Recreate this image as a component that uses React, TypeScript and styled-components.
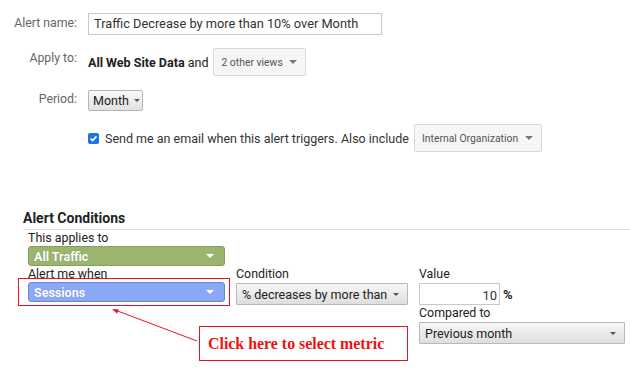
import React from 'react';
import styled, { createGlobalStyle } from 'styled-components';

const GlobalStyle = createGlobalStyle`
  html, body {
    margin: 0;
    background: #fff;
  }
  body {
    font-family: Roboto, 'Liberation Sans', Arial, sans-serif;
    color: #222;
  }
`;

const Page = styled.div`
  width: 630px;
  height: 368px;
  overflow: hidden;
  position: relative;
`;

const Form = styled.div`
  display: flex;
  flex-direction: column;
  gap: 13px;
  padding-top: 13px;
`;

const Row = styled.div<{ h: number }>`
  display: grid;
  grid-template-columns: 77px 1fr;
  column-gap: 11px;
  height: ${p => p.h}px;
`;

const Label = styled.div`
  text-align: right;
  font-size: 12.3px;
  line-height: 20px;
  color: #666;
  align-self: start;
`;

const Field = styled.div`
  display: flex;
  align-items: center;
  gap: 5px;
  font-size: 12.5px;
  color: #222;
  white-space: nowrap;
`;

const TextInput = styled.div`
  box-sizing: border-box;
  width: 294px;
  height: 22px;
  border: 1px solid #c8c8c8;
  padding: 0 5px;
  font-size: 12.8px;
  line-height: 20px;
  color: #333;
  white-space: nowrap;
`;

const Strong = styled.span`
  font-weight: 700;
  color: #222;
`;

const Chooser = styled.div<{ w: number }>`
  box-sizing: border-box;
  width: ${p => p.w}px;
  height: 28px;
  display: flex;
  align-items: center;
  justify-content: space-between;
  gap: 6px;
  padding: 0 8px 0 7px;
  border: 1px solid #d9d9d9;
  border-radius: 2px;
  background: #f6f6f6;
  font-size: 10.4px;
  color: #555;
  white-space: nowrap;
`;

const Caret = styled.span<{ c?: string; s?: number }>`
  width: 0;
  height: 0;
  border-left: ${p => p.s ?? 4}px solid transparent;
  border-right: ${p => p.s ?? 4}px solid transparent;
  border-top: ${p => p.s ?? 4}px solid ${p => p.c ?? '#666'};
  flex: none;
`;

const MenuButton = styled.div`
  box-sizing: border-box;
  width: 55px;
  height: 21px;
  display: flex;
  align-items: center;
  gap: 5px;
  padding: 0 5px 0 4px;
  border: 1px solid #b5b5b5;
  border-radius: 2px;
  background: linear-gradient(#f8f8f8, #e2e2e2);
  font-size: 12.5px;
  color: #222;
`;

const Check = styled.span`
  box-sizing: border-box;
  width: 11px;
  height: 11px;
  border-radius: 2px;
  background: #1a73e8;
  display: inline-flex;
  align-items: center;
  justify-content: center;
  margin-right: 1px;
`;

const EmailText = styled.span`
  font-size: 12.5px;
  color: #333;
`;

const Conditions = styled.div`
  position: relative;
  margin-top: 57px;
`;

const Heading = styled.div`
  margin-left: 23px;
  width: 607px;
  font-size: 14px;
  font-weight: 700;
  color: #222;
  line-height: 17px;
  padding: 1px 0 2px;
  border-bottom: 1px solid #e0e0e0;
`;

const CondGrid = styled.div`
  display: grid;
  grid-template-columns: 197px 172px 206px;
  column-gap: 11px;
  padding-left: 28px;
  align-items: start;
`;

const CondLabel = styled.div<{ col?: number }>`
  grid-column: ${p => p.col ?? 1};
  font-size: 12.4px;
  line-height: 16px;
  color: #222;
  height: 16px;
`;

const Bar = styled.div<{ bg: string; edge: string }>`
  grid-column: 1;
  box-sizing: border-box;
  height: 20px;
  display: flex;
  align-items: center;
  justify-content: space-between;
  padding: 0 10px 0 5px;
  background: ${p => p.bg};
  border: 1px solid ${p => p.edge};
  border-radius: 3px;
  color: #fff;
  font-size: 12.5px;
  font-weight: 700;
  text-shadow: 0 0 1px rgba(0, 0, 0, 0.25);
`;

const Highlight = styled.div`
  position: relative;
  grid-column: 1;
  &::after {
    content: '';
    position: absolute;
    top: -4px;
    left: -10px;
    right: -5px;
    bottom: -4px;
    border: 1px solid #e8141c;
  }
`;

const Select = styled.div<{ col: number; w?: number }>`
  grid-column: ${p => p.col};
  box-sizing: border-box;
  width: ${p => (p.w ? `${p.w}px` : 'auto')};
  height: 22px;
  margin-top: 1px;
  display: flex;
  align-items: center;
  justify-content: space-between;
  padding: 0 8px 0 5px;
  border: 1px solid #b8b8b8;
  border-radius: 1px;
  background: linear-gradient(#f7f7f7, #dedede);
  font-size: 12.5px;
  color: #222;
  white-space: nowrap;
`;

const ValueCell = styled.div`
  grid-column: 3;
  display: flex;
  align-items: flex-end;
  gap: 3px;
  margin-top: 1px;
`;

const ValueInput = styled.div`
  box-sizing: border-box;
  width: 81px;
  height: 22px;
  border: 1px solid #c8c8c8;
  text-align: right;
  padding: 0 2px;
  font-size: 13px;
  line-height: 24px;
  color: #333;
`;

const Percent = styled.span`
  font-size: 13px;
  font-weight: 700;
  line-height: 20px;
`;

const Callout = styled.div`
  position: absolute;
  left: 199px;
  top: 117px;
  box-sizing: border-box;
  width: 209px;
  height: 35px;
  border: 1px solid #e8141c;
  padding-left: 8px;
  display: flex;
  align-items: center;
  font-family: 'Liberation Serif', 'Times New Roman', serif;
  font-weight: 700;
  font-size: 15.9px;
  color: #ee1111;
`;

const Pointer = styled.svg`
  position: absolute;
  left: 105px;
  top: 96px;
`;

export default function App() {
  return (
    <Page>
      <GlobalStyle />
      <Form>
        <Row h={22}>
          <Label>Alert name:</Label>
          <Field>
            <TextInput>Traffic Decrease by more than 10% over Month</TextInput>
          </Field>
        </Row>
        <Row h={28}>
          <Label>Apply to:</Label>
          <Field>
            <span>
              <Strong>All Web Site Data</Strong> and
            </span>
            <Chooser w={93}>
              2 other views
              <Caret c="#777" />
            </Chooser>
          </Field>
        </Row>
        <Row h={22}>
          <Label>Period:</Label>
          <Field>
            <MenuButton>
              Month
              <Caret c="#555" s={3} />
            </MenuButton>
          </Field>
        </Row>
        <Row h={28}>
          <span />
          <Field>
            <Check>
              <svg width="9" height="9" viewBox="0 0 10 10">
                <path d="M1.8 5.2 L4 7.3 L8.3 2.6" fill="none" stroke="#fff" strokeWidth="1.8" />
              </svg>
            </Check>
            <EmailText>Send me an email when this alert triggers. Also include</EmailText>
            <Chooser w={128}>
              Internal Organization
              <Caret c="#777" />
            </Chooser>
          </Field>
        </Row>
      </Form>

      <Conditions>
        <Heading>Alert Conditions</Heading>
        <CondGrid>
          <CondLabel>This applies to</CondLabel>
          <Bar bg="#9bb56f" edge="#86a05c">
            All Traffic
            <Caret c="#fff" />
          </Bar>
          <CondLabel col={1}>Alert me when</CondLabel>
          <CondLabel col={2}>Condition</CondLabel>
          <CondLabel col={3}>Value</CondLabel>
          <Highlight>
            <Bar bg="#8aa8f8" edge="#6f87c9">
              Sessions
              <Caret c="#fff" />
            </Bar>
          </Highlight>
          <Select col={2}>
            % decreases by more than
            <Caret c="#555" s={3} />
          </Select>
          <ValueCell>
            <ValueInput>10</ValueInput>
            <Percent>%</Percent>
          </ValueCell>
          <CondLabel col={3}>Compared to</CondLabel>
          <Select col={3} w={206}>
            Previous month
            <Caret c="#555" s={3} />
          </Select>
        </CondGrid>
        <Pointer width="100" height="40" viewBox="0 0 100 40">
          <line x1="92" y1="36" x2="10" y2="5" stroke="#e8141c" strokeWidth="1" />
          <path d="M7 4 L14 4.5 L12 8.5 Z" fill="#e8141c" />
        </Pointer>
        <Callout>Click here to select metric</Callout>
      </Conditions>
    </Page>
  );
}
